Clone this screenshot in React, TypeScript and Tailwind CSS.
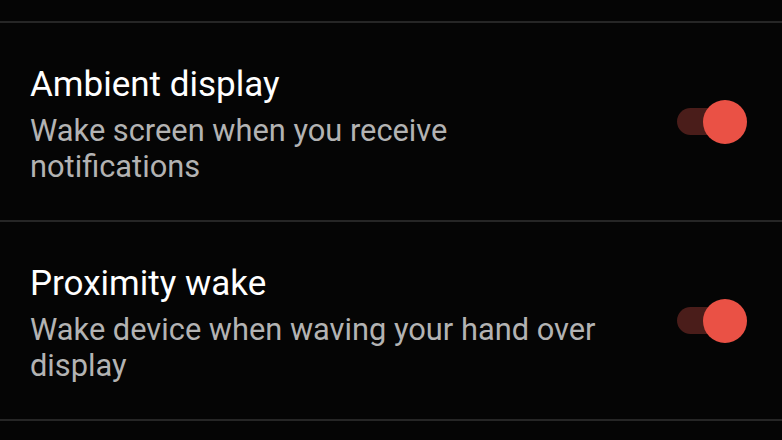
import { useState } from "react";

type SettingRowProps = {
    title: string;
    summary: string;
    checked: boolean;
    onToggle: () => void;
};

function Toggle({ checked, onToggle }: { checked: boolean; onToggle: () => void }) {
    return (
        <button
            type="button"
            role="switch"
            aria-checked={checked}
            onClick={onToggle}
            className="relative flex h-[44px] w-[72px] shrink-0 items-center"
        >
            <span
                className={
                    checked
                        ? "absolute left-[2px] h-[27px] w-[60px] rounded-full bg-[#4a1d1a]"
                        : "absolute left-[2px] h-[27px] w-[60px] rounded-full bg-[#3a3a3a]"
                }
            />
            <span
                className={
                    checked
                        ? "absolute left-[28px] h-[44px] w-[44px] rounded-full bg-[#ea5145]"
                        : "absolute left-0 h-[44px] w-[44px] rounded-full bg-[#bdbdbd]"
                }
            />
        </button>
    );
}

function SettingRow({ title, summary, checked, onToggle }: SettingRowProps) {
    return (
        <div className="flex h-[199px] items-center justify-between border-t-2 border-[#262626] pl-[30px] pr-[35px]">
            <div className="flex w-[580px] flex-col pt-[6px]">
                <span className="mb-[8px] text-[35px] leading-[40px] text-white">{title}</span>
                <span className="text-[30.8px] leading-[36px] text-[#b3b3b3]">{summary}</span>
            </div>
            <Toggle checked={checked} onToggle={onToggle} />
        </div>
    );
}

export default function App() {
    const [ambient, setAmbient] = useState(true);
    const [proximity, setProximity] = useState(true);

    return (
        <div className="h-[440px] w-[782px] overflow-hidden bg-[#050505] pt-[21px] font-['Roboto',sans-serif]">
            <SettingRow
                title="Ambient display"
                summary="Wake screen when you receive notifications"
                checked={ambient}
                onToggle={() => setAmbient(!ambient)}
            />
            <SettingRow
                title="Proximity wake"
                summary="Wake device when waving your hand over display"
                checked={proximity}
                onToggle={() => setProximity(!proximity)}
            />
            <div className="border-t-2 border-[#262626]" />
        </div>
    );
}
